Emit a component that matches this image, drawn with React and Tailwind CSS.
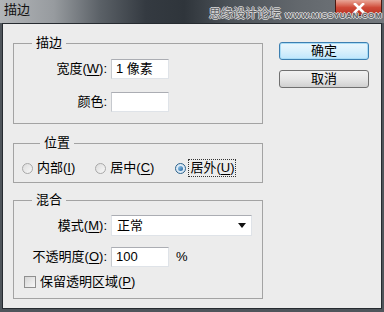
import React from 'react';

// Underlined access key, the way Windows dialogs show it
const Key = ({ children }) => <span className="underline underline-offset-2">{children}</span>;

const Field = ({ label, children }) => (
  <div className="flex items-center">
    <div className="w-[93px] text-right leading-[16px]">{label}</div>
    <div className="ml-[4px] flex items-center">{children}</div>
  </div>
);

const TextBox = ({ value = '', width = 'w-[58px]' }) => (
  <div className={`${width} h-[20px] bg-white border border-[#dfe3e8] border-t-[#abadb3] border-l-[#c6c9ce] flex items-center pl-[4px] leading-[16px]`}>
    {value}
  </div>
);

const Radio = ({ checked }) => (
  <span
    className={`w-[11px] h-[11px] rounded-full border flex items-center justify-center ${
      checked ? 'border-[#2c628b] bg-[#dbe9f5]' : 'border-[#a8a8a8] bg-gradient-to-br from-[#dcdcdc] to-[#f8f8f8]'
    }`}
  >
    {checked && <span className="w-[5px] h-[5px] rounded-full bg-gradient-to-br from-[#9ad1f5] to-[#1b5f9a]" />}
  </span>
);

const Group = ({ title, className = '', children }) => (
  <fieldset className={`border border-[#a3a3a3] ${className}`}>
    <legend className="ml-[18px] px-[4px] leading-[16px]">{title}</legend>
    {children}
  </fieldset>
);

export default function App() {
  return (
    <div className="w-[384px] h-[312px] bg-[#4f555b] flex flex-col font-['Liberation_Sans','Noto_Sans_CJK_SC',sans-serif] text-[13px] text-black overflow-hidden">
      {/* title bar */}
      <div className="relative h-[23px] flex items-start bg-[linear-gradient(to_right,#b2b5b8_0%,#979b9f_14%,#5b6167_26%,#343a41_38%,#2f353b_48%,#4d5359_60%,#63686d_78%,#74797e_100%)]">
        <div className="pl-[4px] pt-[3px] leading-[14px] text-[13px] text-[#111]">描边</div>
        <div className="flex-1" />
        <div className="w-[47px] h-[16px] mr-[2px] rounded-b-[4px] border border-t-0 border-[#4a1810] bg-gradient-to-b from-[#e8a698] via-[#cf4a38] to-[#b8301f] flex items-center justify-center">
          <svg width="12" height="10" viewBox="0 0 12 10">
            <path d="M2 1 L10 9 M10 1 L2 9" stroke="#fff" strokeWidth="2.6" strokeLinecap="square" />
          </svg>
        </div>
        {/* watermark stamped over the frame */}
        <div className="absolute left-[209px] top-[8px] whitespace-nowrap flex items-end gap-[4px] text-[#5e6165] [text-shadow:1px_0_0_#d6d6d6,-1px_0_0_#d6d6d6,0_1px_0_#d6d6d6,0_-1px_0_#d6d6d6]">
          <span className="text-[12px] leading-[13px]">思缘设计论坛</span>
          <span className="text-[8px] leading-[10px] tracking-[0.6px] font-bold">WWW.MISSYUAN.COM</span>
        </div>
      </div>

      {/* client area */}
      <div className="mx-[2px] h-[286px] border border-[#262b30] bg-[#ececec] flex pl-[10px]">
        <div className="w-[250px] pt-[11px] flex flex-col">
          <Group title="描边" className="pt-[8px] pb-[11px]">
            <div className="flex flex-col gap-[13px]">
              <Field label={<>宽度(<Key>W</Key>):</>}>
                <TextBox value="1 像素" />
              </Field>
              <Field label="颜色:">
                <TextBox />
              </Field>
            </div>
          </Group>

          <Group title="位置" className="mt-[11px] pt-[9px] pb-[6px] pl-[8px]">
            <div className="flex items-center h-[16px] leading-[16px]">
              <Radio />
              <span className="ml-[4px]">内部(<Key>I</Key>)</span>
              <span className="ml-[20px]"><Radio /></span>
              <span className="ml-[4px]">居中(<Key>C</Key>)</span>
              <span className="ml-[21px]"><Radio checked /></span>
              <span className="ml-[3px] px-[1px] outline-1 outline-dotted outline-[#333]">居外(<Key>U</Key>)</span>
            </div>
          </Group>

          <Group title="混合" className="mt-[9px] pt-[7px] pb-[9px]">
            <div className="flex flex-col">
              <Field label={<>模式(<Key>M</Key>):</>}>
                <div className="w-[141px] h-[21px] bg-white border border-[#dfe3e8] border-t-[#abadb3] flex items-center justify-between pl-[5px] pr-[5px] leading-[16px]">
                  <span>正常</span>
                  <svg width="8" height="5" viewBox="0 0 8 5">
                    <path d="M0 0 H8 L4 5 Z" fill="#111" />
                  </svg>
                </div>
              </Field>
              <div className="mt-[11px]">
                <Field label={<>不透明度(<Key>O</Key>):</>}>
                  <TextBox value="100" />
                  <span className="ml-[7px] leading-[16px]">%</span>
                </Field>
              </div>
              <div className="mt-[8px] pl-[10px] flex items-center h-[14px]">
                <span className="w-[12px] h-[12px] border border-[#8f8f8f] bg-gradient-to-br from-[#d6d6d6] to-[#f7f7f7]" />
                <span className="ml-[4px] leading-[16px]">保留透明区域(<Key>P</Key>)</span>
              </div>
            </div>
          </Group>
        </div>

        <div className="ml-[16px] pt-[18px] flex flex-col gap-[10px]">
          <button className="w-[90px] h-[18px] rounded-[3px] border border-[#3c7fb1] bg-gradient-to-b from-[#eaf6fd] via-[#d9f0fc] to-[#bee6fd] flex items-center justify-center leading-[14px] shadow-[inset_0_0_0_1px_#a9dcf6]">
            确定
          </button>
          <button className="w-[90px] h-[18px] rounded-[3px] border border-[#707070] bg-gradient-to-b from-[#f2f2f2] via-[#e6e6e6] to-[#d0d0d0] flex items-center justify-center leading-[14px]">
            取消
          </button>
        </div>
      </div>
    </div>
  );
}
